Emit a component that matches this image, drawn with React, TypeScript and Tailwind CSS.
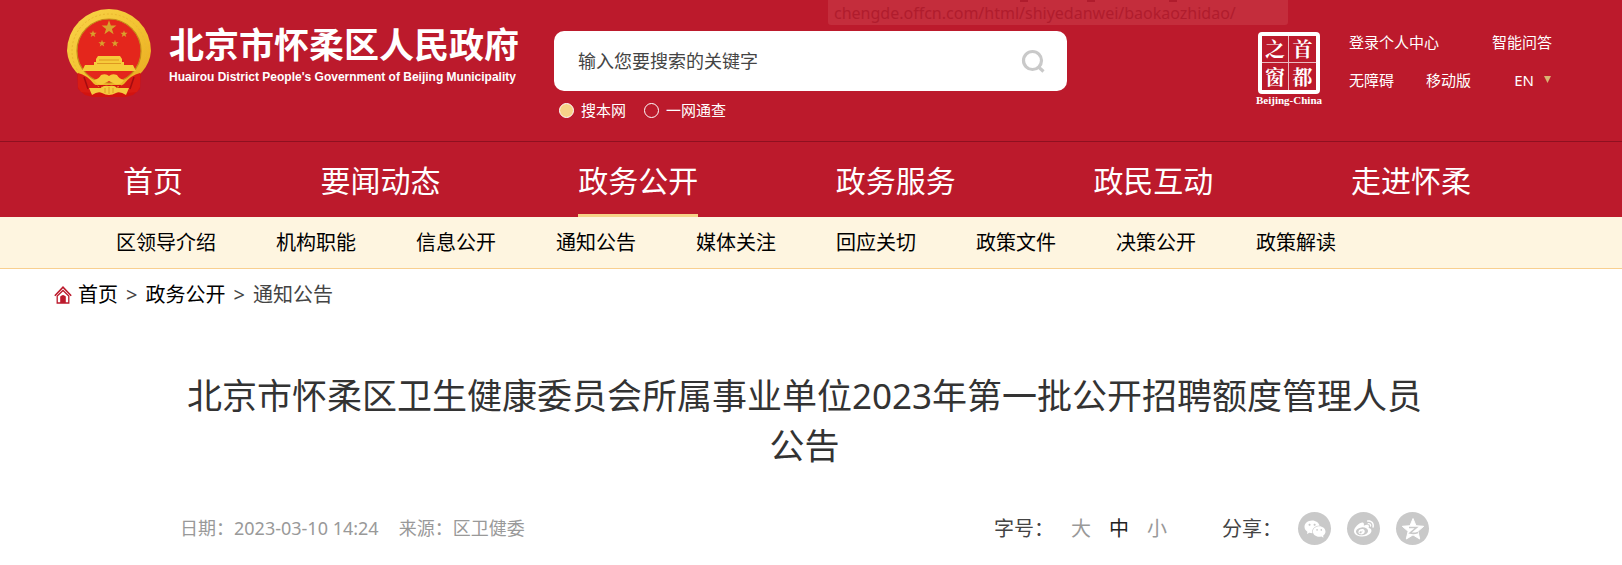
import React from "react";
import { AiFillWechat } from "react-icons/ai";
import { FaWeibo } from "react-icons/fa";

const mainNav = ["首页", "要闻动态", "政务公开", "政务服务", "政民互动", "走进怀柔"];
const subNav = [
  "区领导介绍", "机构职能", "信息公开", "通知公告", "媒体关注",
  "回应关切", "政策文件", "决策公开", "政策解读",
];

const STAR = "M0-10 2.4-3.2 9.5-3.1 3.8 1.2 5.9 8.1 0 4-5.9 8.1-3.8 1.2-9.5-3.1-2.4-3.2Z";

function Emblem() {
  return (
    <svg viewBox="0 0 84 88" className="h-[88px] w-[84px] shrink-0" aria-hidden="true">
      <defs>
        <linearGradient id="gold" x1="0" y1="0" x2="1" y2="1">
          <stop offset="0" stopColor="#f9d44a" />
          <stop offset="0.5" stopColor="#f3c433" />
          <stop offset="1" stopColor="#e9a91f" />
        </linearGradient>
      </defs>
      <path d="M10 60 11 80 18 86 26 88H58L66 86 73 80 74 60Z" fill="#d2130f" />
      <path d="M42 0A42 42 0 0 1 84 42Q83 54 75 63L60 76H24L9 63Q1 54 0 42A42 42 0 0 1 42 0Z" fill="url(#gold)" />
      <circle cx="42" cy="42" r="37" fill="none" stroke="#eab830" strokeWidth="1" strokeDasharray="2 2" />
      <circle cx="42" cy="42" r="32" fill="#e4261c" stroke="#c58a1a" strokeWidth="1.200" />
      <g fill="#d9a02c">
        <path d={STAR} transform="translate(42 19) scale(.78)" />
        <path d={STAR} transform="translate(26 25) scale(.38)" />
        <path d={STAR} transform="translate(57 25) scale(.38)" />
        <path d={STAR} transform="translate(35 34.500) scale(.38)" />
        <path d={STAR} transform="translate(48 34.500) scale(.38)" />
      </g>
      <path d="M31 47H53L55 50V53H57V56H27V53H29V50ZM18 56H66L69 62H15Z" fill="#f6cb3a" />
      <path d="M32 51H52M30 54.500H54" stroke="#d98a1a" strokeWidth=".8" />
      <path d="M11 64Q20 66 27 75L32 78 24 84 14 83 11 78ZM73 64Q64 66 57 75L52 78 60 84 70 83 73 78Z" fill="#d91c14" />
      <path d="M17 68 21 80M67 68 63 80" stroke="#a50c10" strokeWidth="1.500" />
      <path d="M22 62H62L56 68H28Z" fill="#e4261c" />
      <path d="M27 71Q32 70 34 66Q39 64 42 67Q45 64 50 66Q52 70 57 71Q53 77 48 75L42 72 36 75Q31 77 27 71Z" fill="#f6c93a" />
      <path d="M22 79H34Q36 76 42 77Q48 76 50 79H62L59 86Q53 82 49 84Q42 88 35 84Q31 82 25 86Z" fill="#f5c93f" />
      <path d="M38 79V84M42 78V85M46 79V84" stroke="#d9931c" strokeWidth=".8" />
    </svg>
  );
}

function CapitalWindow() {
  return (
    <a href="#capital" className="flex w-[70px] flex-col items-center text-white">
      <span className="grid size-[62px] grid-cols-2 grid-rows-2 rounded-[4px] border-4 border-white font-['Noto_Serif_CJK_SC','Noto_Sans_CJK_SC',serif] text-[20px] leading-5 font-bold">
        {["之", "首", "窗", "都"].map((c, i) => (
          <span
            key={c}
            className={
              "flex items-center justify-center border-white/70 " +
              (i % 2 === 0 ? "border-r " : "") + (i < 2 ? "border-b" : "")
            }
          >
            {c}
          </span>
        ))}
      </span>
      <span className="font-['Liberation_Serif',serif] text-[11px] leading-3 font-bold whitespace-nowrap">Beijing-China</span>
    </a>
  );
}

function QzoneIcon() {
  return (
    <svg viewBox="0 0 24 24" className="size-6" aria-hidden="true">
      <path d="M12 1.500 15 8.700 22.700 9.300 16.900 14.300 18.700 22 12 17.900 5.300 22 7.100 14.300 1.300 9.300 9 8.700Z" fill="#fff" stroke="#fff" strokeLinejoin="round" />
      <path d="M8 10.500H15.500L9 16Q13 17 17 15.500" fill="none" stroke="#c9c9c9" strokeWidth="1.600" />
    </svg>
  );
}

export default function App() {
  return (
    <div className="min-h-screen bg-white font-['Noto_Sans','Noto_Sans_CJK_SC',sans-serif] text-black">
      <header className="relative bg-[#bc1a2c] text-white">
        <div className="flex h-[142px] items-start border-b border-[#8f1020] pr-[70px] pl-[67px]">
          <a href="#home" className="flex items-start pt-[9px]">
            <Emblem />
            <span className="ml-[18px] flex w-[349px] flex-col whitespace-nowrap pt-4">
              <span className="text-[35px] leading-10 font-bold">北京市怀柔区人民政府</span>
              <span className="font-['Liberation_Sans',sans-serif] text-[12px] leading-6 font-bold">
                Huairou District People's Government of Beijing Municipality
              </span>
            </span>
          </a>

          <form className="ml-9 w-[513px] pt-[31px]" onSubmit={(e) => e.preventDefault()}>
            <div className="flex h-[60px] items-center rounded-[10px] bg-white pr-[22px] pl-6">
              <input
                type="text"
                aria-label="搜索"
                placeholder="输入您要搜索的关键字"
                className="min-w-0 flex-1 bg-transparent text-[18px] text-[#444] outline-none placeholder:text-[#444]"
              />
              <button type="submit" aria-label="搜索">
                <svg viewBox="0 0 24 24" className="size-6" fill="none" stroke="#c9c9c9" strokeWidth="3.200">
                  <circle cx="11.500" cy="11.500" r="9" />
                  <path d="M17.500 18 22.500 22.500" />
                </svg>
              </button>
            </div>
            <div className="flex h-[38px] items-center gap-[18px] pl-[5px] text-[15px]">
              <label className="flex items-center gap-[7px]">
                <input type="radio" name="scope" defaultChecked className="size-[15px] appearance-none rounded-full border border-white checked:bg-[#f6d388]" />
                搜本网
              </label>
              <label className="flex items-center gap-[7px]">
                <input type="radio" name="scope" className="size-[15px] appearance-none rounded-full border border-white checked:bg-[#f6d388]" />
                一网通查
              </label>
            </div>
          </form>

          <div className="ml-auto flex items-start gap-[25px] pt-8">
            <CapitalWindow />
            <div className="flex w-[203px] flex-col gap-[18px] text-[15px] leading-5">
              <div className="flex justify-between">
                <a href="#login">登录个人中心</a>
                <a href="#qa">智能问答</a>
              </div>
              <div className="flex">
                <a href="#accessible">无障碍</a>
                <a href="#mobile" className="ml-8">移动版</a>
                <a href="#en" className="ml-auto flex items-center gap-[10px]">
                  EN
                  <svg viewBox="0 0 8 8" className="size-2" aria-hidden="true">
                    <path d="M0 0H7L3.500 7Z" fill="#d9b372" />
                  </svg>
                </a>
              </div>
            </div>
          </div>
        </div>

        <nav className="flex h-[75px] justify-between pr-[151px] pl-[123px] text-[30px]">
          {mainNav.map((t) => (
            <a
              key={t}
              href="#nav"
              className={
                "flex items-center border-b-3 pt-1 " +
                (t === "政务公开" ? "border-[#f6d388]" : "border-transparent")
              }
            >
              {t}
            </a>
          ))}
        </nav>

        <div className="absolute top-0 left-[828px] h-[25px] w-[460px] overflow-hidden rounded-b-[3px] bg-[#c42d3c] pl-1.5 text-[16px] leading-[26px] text-[#b01c2d]">
          chengde.offcn.com/html/shiyedanwei/baokaozhidao/
          <span className="absolute top-0 left-[192px] h-0.5 w-2 bg-[#b01c2d]" />
          <span className="absolute top-0 left-[259px] h-0.5 w-2 bg-[#b01c2d]" />
          <span className="absolute top-0 left-[341px] h-0.5 w-2 bg-[#b01c2d]" />
        </div>
      </header>

      <nav className="flex h-[52px] items-center gap-[60px] border-b border-[#f8cf8f] bg-[#fef5e0] pt-px pl-[116px] text-[20px]">
        {subNav.map((t) => (
          <a key={t} href="#sub">{t}</a>
        ))}
      </nav>

      <nav aria-label="位置" className="flex h-[52px] items-center gap-2 pl-[54px] text-[20px] text-[#444]">
        <a href="#home" className="flex items-center gap-[6px] text-black">
          <svg viewBox="0 0 18 18" className="size-[18px]" aria-hidden="true">
            <path d="M.8 9.800 9 1.200 17.200 9.800" fill="none" stroke="#bc1a2c" strokeWidth="1.600" />
            <path d="M3.200 10 9 4.500 14.800 10V17H3.200Z" fill="none" stroke="#bc1a2c" strokeWidth="1.300" />
            <path d="M6.200 17V10.500Q9 7.500 11.800 10.500V17Z" fill="#bc1a2c" />
          </svg>
          首页
        </a>
        <span>&gt;</span>
        <a href="#open" className="text-black">政务公开</a>
        <span>&gt;</span>
        <span>通知公告</span>
      </nav>

      <main className="pr-[193px] pl-[180px]">
        <h1 className="mt-[50px] text-center text-[35px] leading-[50px] text-[#333]">
          北京市怀柔区卫生健康委员会所属事业单位2023年第一批公开招聘额度管理人员公告
        </h1>
        <div className="mt-[41px] flex items-center">
          <p className="flex gap-5 text-[18px] text-[#999]">
            <span>日期：2023-03-10 14:24</span>
            <span>来源：区卫健委</span>
          </p>
          <div className="ml-auto flex items-center text-[20px] text-[#444]">
            <span>字号：</span>
            <div className="ml-[17px] flex gap-[18px]">
              <button type="button" className="text-[#999]">大</button>
              <button type="button" className="text-[#222]">中</button>
              <button type="button" className="text-[#999]">小</button>
            </div>
            <span className="ml-[55px]">分享：</span>
            <div className="ml-4 flex gap-4">
              <button type="button" aria-label="微信" className="flex size-[33px] items-center justify-center rounded-full bg-[#c9c9c9] text-white">
                <AiFillWechat className="size-6" />
              </button>
              <button type="button" aria-label="微博" className="flex size-[33px] items-center justify-center rounded-full bg-[#c9c9c9] text-white">
                <FaWeibo className="size-5" />
              </button>
              <button type="button" aria-label="QQ空间" className="flex size-[33px] items-center justify-center rounded-full bg-[#c9c9c9] text-white">
                <QzoneIcon />
              </button>
            </div>
          </div>
        </div>
      </main>
    </div>
  );
}
